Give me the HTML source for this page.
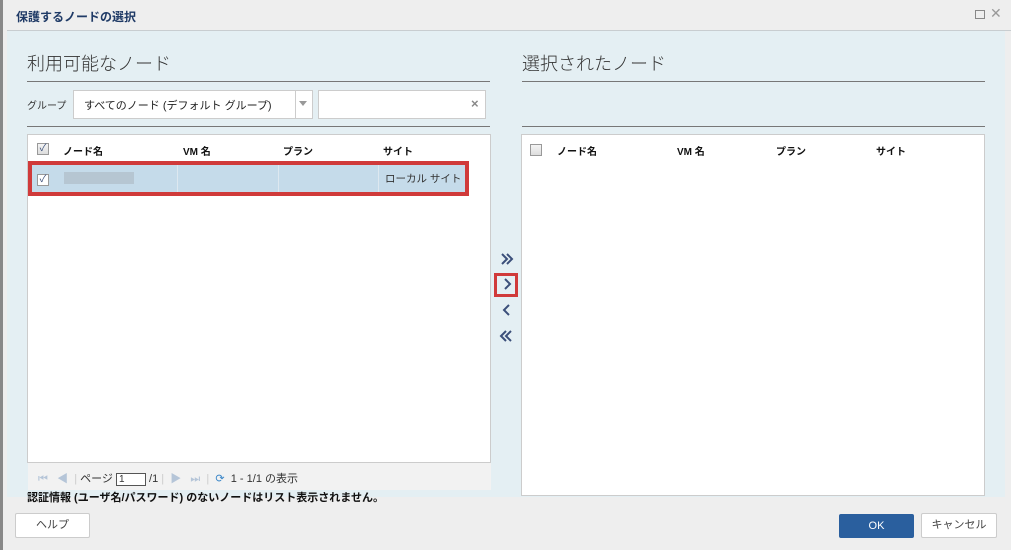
<!DOCTYPE html>
<html><head><meta charset="utf-8"><style>
*{margin:0;padding:0;box-sizing:border-box}
body{width:1011px;height:550px;overflow:hidden;background:#eeeeee;font-family:"Liberation Sans","Noto Sans CJK JP",sans-serif;position:relative;font-size:11px;color:#222}
.a{position:absolute}
.h{font-size:18px;font-weight:300;color:#333}
.line{height:1px;background:#777}
.th{font-weight:bold;font-size:10px;color:#111}
.cb{width:12px;height:12px;border:1px solid #999;background:linear-gradient(#f4f4f4,#ddd);font-size:10px;line-height:10px;text-align:center;color:#3a4f7a}
.btn{background:#fff;border:1px solid #ccc;border-radius:2px;text-align:center;line-height:23px;color:#444}
</style></head><body>
<div class="a" style="left:0;top:0;width:3px;height:550px;background:#888"></div>
<div class="a" style="left:16px;top:8px;font-weight:bold;font-size:12px;color:#1f3a66">保護するノードの選択</div>
<div class="a" style="left:975px;top:10px;width:10px;height:9px;border:1px solid #888"></div>
<div class="a" style="left:990px;top:5px;font-size:14px;color:#999">✕</div>
<div class="a" style="left:7px;top:30px;width:1004px;height:1px;background:#c8cdd0"></div>
<div class="a" style="left:7px;top:31px;width:998px;height:466px;background:#e4eff3"></div>

<div class="a h" style="left:27px;top:50px">利用可能なノード</div>
<div class="a line" style="left:27px;top:81px;width:463px"></div>
<div class="a" style="left:27px;top:97px;color:#333;font-size:10px">グループ</div>
<div class="a" style="left:73px;top:90px;width:240px;height:29px;background:#fff;border:1px solid #ccc"></div>
<div class="a" style="left:84px;top:97px;color:#222">すべてのノード (デフォルト グループ)</div>
<div class="a" style="left:295px;top:91px;width:1px;height:27px;background:#ccc"></div>
<div class="a" style="left:299px;top:101px;width:0;height:0;border-left:4px solid transparent;border-right:4px solid transparent;border-top:5px solid #999"></div>
<div class="a" style="left:318px;top:90px;width:168px;height:29px;background:#fff;border:1px solid #ccc"></div>
<div class="a" style="left:471px;top:96px;color:#888;font-size:13px;font-weight:bold">×</div>
<div class="a line" style="left:27px;top:126px;width:463px"></div>

<div class="a" style="left:27px;top:134px;width:464px;height:329px;background:#fff;border:1px solid #ccc"></div>
<div class="a cb" style="left:37px;top:143px">✓</div>
<div class="a th" style="left:63px;top:143px">ノード名</div>
<div class="a th" style="left:183px;top:143px">VM 名</div>
<div class="a th" style="left:283px;top:143px">プラン</div>
<div class="a th" style="left:383px;top:143px">サイト</div>
<div class="a" style="left:28px;top:161px;width:441px;height:35px;border:4px solid #d03a3a;background:#c5dbea"></div>
<div class="a" style="left:177px;top:165px;width:1px;height:27px;background:#dde8f0"></div>
<div class="a" style="left:278px;top:165px;width:1px;height:27px;background:#dde8f0"></div>
<div class="a" style="left:378px;top:165px;width:1px;height:27px;background:#dde8f0"></div>
<div class="a cb" style="left:37px;top:174px;background:#fff">✓</div>
<div class="a" style="left:64px;top:172px;width:70px;height:12px;background:#b6c6d2"></div>
<div class="a" style="left:385px;top:171px;color:#333;font-size:10.5px">ローカル サイト</div>
<div class="a" style="left:28px;top:463px;width:463px;height:27px;background:#f2f2f2"></div>
<div class="a" style="left:38px;top:470px;color:#b5c5d8;font-size:11px">⏮ &nbsp; ◀ &nbsp;<span style="color:#ccc">|</span> <span style="color:#333">ページ</span> <span style="display:inline-block;width:30px;height:13px;border:1px solid #555;background:#fff;vertical-align:middle;color:#333;font-size:10px;line-height:11px;padding-left:2px">1</span> <span style="color:#333">/1</span> <span style="color:#ccc">|</span> &nbsp;▶ &nbsp; ⏭ &nbsp;<span style="color:#ccc">|</span> &nbsp;<span style="color:#3a86c8">⟳</span> &nbsp;<span style="color:#333">1 - 1/1 の表示</span></div>
<div class="a" style="left:27px;top:489px;font-weight:bold;font-size:11px;color:#111">認証情報 (ユーザ名/パスワード) のないノードはリスト表示されません。</div>

<svg class="a" style="left:494px;top:250px" width="26" height="100" viewBox="0 0 26 100" fill="none" stroke="#3b4f7a" stroke-width="2">
<path d="M8 4l5 5-5 5M13 4l5 5-5 5"/>
<path d="M11 29l5 5-5 5"/>
<path d="M15 55l-5 5 5 5"/>
<path d="M12 81l-5 5 5 5M17 81l-5 5 5 5"/>
</svg>
<div class="a" style="left:494px;top:273px;width:24px;height:24px;border:3px solid #d03a3a"></div>

<div class="a h" style="left:522px;top:50px">選択されたノード</div>
<div class="a line" style="left:522px;top:81px;width:463px"></div>
<div class="a line" style="left:522px;top:126px;width:463px"></div>
<div class="a" style="left:521px;top:134px;width:464px;height:362px;background:#fff;border:1px solid #ccc"></div>
<div class="a cb" style="left:530px;top:144px"></div>
<div class="a th" style="left:557px;top:143px">ノード名</div>
<div class="a th" style="left:677px;top:143px">VM 名</div>
<div class="a th" style="left:776px;top:143px">プラン</div>
<div class="a th" style="left:876px;top:143px">サイト</div>

<div class="a btn" style="left:15px;top:513px;width:75px;height:25px">ヘルプ</div>
<div class="a btn" style="left:839px;top:514px;width:75px;height:24px;background:#2a5f9e;border-color:#2a5f9e;color:#fff">OK</div>
<div class="a btn" style="left:921px;top:513px;width:76px;height:25px">キャンセル</div>
</body></html>
